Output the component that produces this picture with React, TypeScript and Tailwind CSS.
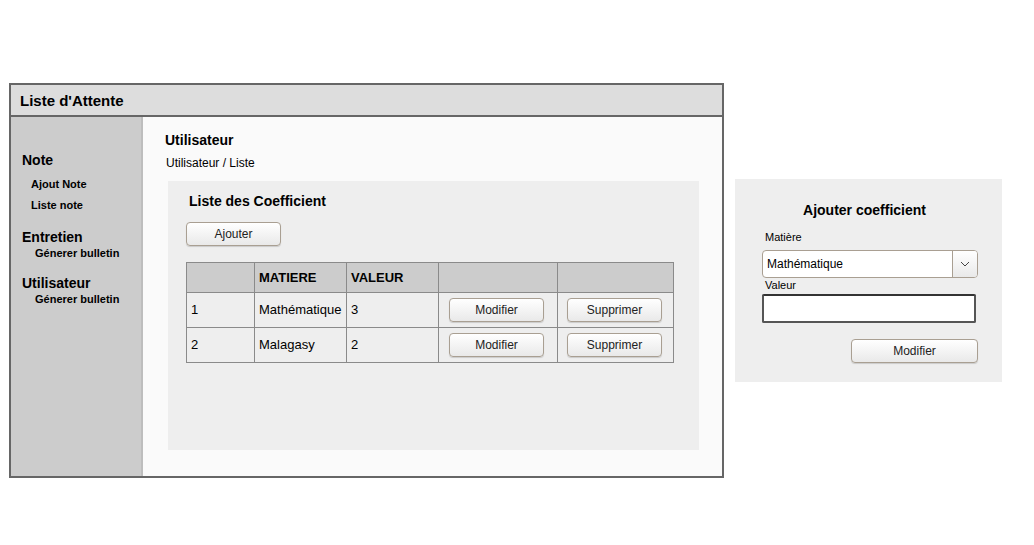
import React from 'react';

const rows = [
  { id: 1, matiere: 'Mathématique', valeur: 3 },
  { id: 2, matiere: 'Malagasy', valeur: 2 },
];

function Btn({ children, className = '' }: { children: React.ReactNode; className?: string }) {
  return (
    <button
      className={`h-[24px] rounded-[4px] border border-[#a99f92] bg-gradient-to-b from-white to-[#e9e9e9] text-[12px] text-[#222] shadow-[0_1px_1px_rgba(0,0,0,0.15)] ${className}`}
    >
      {children}
    </button>
  );
}

export default function App() {
  return (
    <div className="min-h-[545px] w-[1034px] bg-white font-['Liberation_Sans',Arial,sans-serif] text-black">
      <div className="flex items-start pl-[9px] pt-[83px]">
        {/* main window */}
        <div className="flex h-[395px] w-[715px] flex-col border-2 border-[#666]">
          <div className="flex h-[32px] items-center border-b-2 border-[#666] bg-[#dddddd] pl-[9px] pt-[2px] text-[15px] font-bold">
            Liste d'Attente
          </div>
          <div className="flex flex-1">
            <aside className="w-[132px] border-r-2 border-[#bdbdbd] bg-[#cccccc] pl-[11px] pt-[35px]">
              <div className="text-[14px] font-bold leading-[16px]">Note</div>
              <div className="mt-[10px] pl-[9px] text-[11px] font-bold leading-[13px]">Ajout Note</div>
              <div className="mt-[8px] pl-[9px] text-[11px] font-bold leading-[13px]">Liste note</div>
              <div className="mt-[17px] text-[14px] font-bold leading-[16px]">Entretien</div>
              <div className="pl-[13px] text-[11px] font-bold leading-[16px]">Génerer bulletin</div>
              <div className="mt-[14px] text-[14px] font-bold leading-[16px]">Utilisateur</div>
              <div className="pl-[13px] text-[11px] font-bold leading-[16px]">Génerer bulletin</div>
            </aside>
            <main className="flex-1 bg-[#fafafa] pl-[22px] pt-[15px]">
              <div className="text-[14px] font-bold leading-[16px]">Utilisateur</div>
              <div className="mt-[8px] pl-[1px] text-[12px] leading-[14px]">Utilisateur / Liste</div>
              <section className="ml-[3px] mt-[11px] h-[269px] w-[531px] bg-[#eeeeee] pl-[18px] pt-[12px]">
                <div className="pl-[3px] text-[14px] font-bold leading-[16px]">Liste des Coefficient</div>
                <Btn className="mt-[13px] w-[95px]">Ajouter</Btn>
                <table className="mt-[16px] w-[488px] border-collapse text-[13px]">
                  <thead>
                    <tr className="h-[30px] bg-[#cccccc] text-left font-bold">
                      <th className="w-[68px] border border-[#8a8a8a] px-[4px]"></th>
                      <th className="w-[92px] border border-[#8a8a8a] px-[4px]">MATIERE</th>
                      <th className="w-[92px] border border-[#8a8a8a] px-[4px]">VALEUR</th>
                      <th className="w-[119px] border border-[#8a8a8a] px-[4px]"></th>
                      <th className="border border-[#8a8a8a] px-[4px]"></th>
                    </tr>
                  </thead>
                  <tbody>
                    {rows.map((r) => (
                      <tr key={r.id} className="h-[35px]">
                        <td className="border border-[#8a8a8a] px-[4px]">{r.id}</td>
                        <td className="border border-[#8a8a8a] px-[4px]">{r.matiere}</td>
                        <td className="border border-[#8a8a8a] px-[4px]">{r.valeur}</td>
                        <td className="border border-[#8a8a8a] pl-[10px] text-left">
                          <Btn className="w-[95px]">Modifier</Btn>
                        </td>
                        <td className="border border-[#8a8a8a] pl-[9px] text-left">
                          <Btn className="w-[95px]">Supprimer</Btn>
                        </td>
                      </tr>
                    ))}
                  </tbody>
                </table>
              </section>
            </main>
          </div>
        </div>

        {/* side form */}
        <div className="ml-[11px] mt-[96px] h-[203px] w-[267px] bg-[#eeeeee] pl-[27px] pr-[24px] pt-[23px]">
          <div className="pr-[11px] text-center text-[14px] font-bold leading-[16px]">Ajouter coefficient</div>
          <div className="mt-[13px] pl-[3px] text-[11px] leading-[13px]">Matière</div>
          <div className="mt-[6px] flex h-[28px] w-[216px] overflow-hidden rounded-[4px] border border-[#a99f92] bg-white">
            <div className="flex flex-1 items-center pl-[4px] text-[12px]">Mathématique</div>
            <div className="flex w-[25px] items-center justify-center border-l border-[#a99f92] bg-gradient-to-b from-white to-[#e9e9e9]">
              <svg width="10" height="6" viewBox="0 0 10 6" fill="none" stroke="#444" strokeWidth="1">
                <path d="M1 1l4 4 4-4" />
              </svg>
            </div>
          </div>
          <div className="mt-[1px] pl-[3px] text-[11px] leading-[13px]">Valeur</div>
          <div className="mt-[2px] h-[29px] w-[214px] rounded-[2px] border-2 border-[#555] border-t-[#333] bg-white"></div>
          <div className="mt-[16px] flex w-[216px] justify-end">
            <Btn className="w-[127px]">Modifier</Btn>
          </div>
        </div>
      </div>
    </div>
  );
}
